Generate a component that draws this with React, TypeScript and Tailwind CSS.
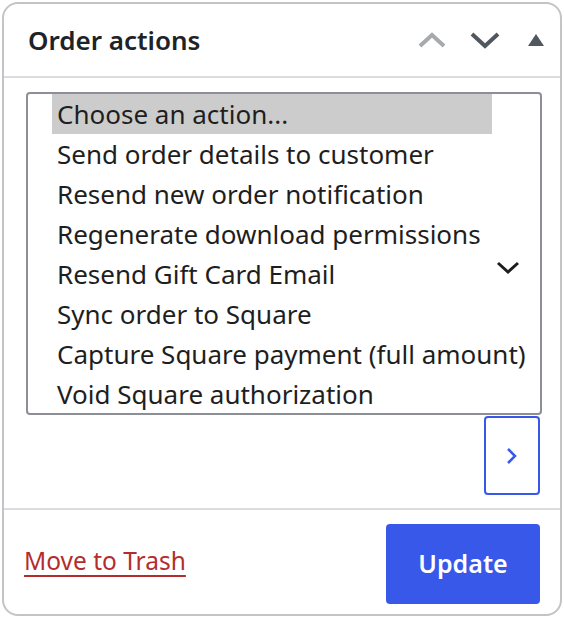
const options: string[] = [
  "Choose an action...",
  "Send order details to customer",
  "Resend new order notification",
  "Regenerate download permissions",
  "Resend Gift Card Email",
  "Sync order to Square",
  "Capture Square payment (full amount)",
  "Void Square authorization",
];

export default function App() {
  return (
    <div
      className="w-[564px] h-[618px] bg-white p-[2px] text-[#1e1e1e]"
      style={{ fontFamily: '"Noto Sans", "Open Sans", sans-serif' }}
    >
      <div className="h-full flex flex-col border-2 border-[#c3c4c7] rounded-[16px] overflow-hidden">
        {/* header */}
        <div className="h-[74px] flex items-center pl-[24px] pr-[16px] border-b-2 border-[#dcdcde]">
          <h2 className="flex-1 text-[26px] font-semibold leading-none text-[#1d2327]">
            Order actions
          </h2>
          <div className="flex items-center">
            <svg width="28" height="18" viewBox="0 0 28 18" className="mr-[24px]">
              <path d="M2 15 L14 4 L26 15" fill="none" stroke="#a7aaad" strokeWidth="4" />
            </svg>
            <svg width="30" height="18" viewBox="0 0 30 18" className="mr-[28px]">
              <path d="M2 3 L15 15 L28 3" fill="none" stroke="#50575e" strokeWidth="4" />
            </svg>
            <svg width="16" height="12" viewBox="0 0 16 12">
              <path d="M8 0 L16 12 L0 12 Z" fill="#50575e" />
            </svg>
          </div>
        </div>

        {/* body */}
        <div className="pt-[14px] pl-[22px] pr-[18px] pb-[13px] border-b-2 border-[#dcdcde]">
          <div className="relative h-[323px] border-2 border-[#8c8f94] rounded-[4px] pl-[24px] text-[26px] leading-[40px]">
            {options.map((opt, i) => (
              <div
                key={i}
                className={
                  i === 0
                    ? "w-[440px] h-[40px] pl-[5px] bg-[#cccccc] whitespace-nowrap"
                    : "h-[40px] pl-[5px] whitespace-nowrap"
                }
              >
                {opt}
              </div>
            ))}
            <svg
              width="24"
              height="14"
              viewBox="0 0 24 14"
              className="absolute right-[20px] top-[167px]"
            >
              <path d="M2 2 L12 11 L22 2" fill="none" stroke="#1e1e1e" strokeWidth="3" />
            </svg>
          </div>
          <div className="flex justify-end mt-px">
            <button className="w-[56px] h-[79px] mr-[2px] border-2 border-[#3858e9] rounded-[4px] flex items-center justify-center">
              <svg width="12" height="18" viewBox="0 0 12 18">
                <path d="M2 2 L9 9 L2 16" fill="none" stroke="#3858e9" strokeWidth="2.5" />
              </svg>
            </button>
          </div>
        </div>

        {/* footer */}
        <div className="flex-1 flex items-start justify-between pl-[20px] pr-[20px] pt-[14px]">
          <a className="mt-[19px] text-[24.5px] text-[#b32d2e] underline underline-offset-[5px] decoration-2 leading-[36px]">
            Move to Trash
          </a>
          <button className="w-[154px] h-[80px] bg-[#3858e9] rounded-[4px] text-white text-[25px] font-semibold">
            Update
          </button>
        </div>
      </div>
    </div>
  );
}
